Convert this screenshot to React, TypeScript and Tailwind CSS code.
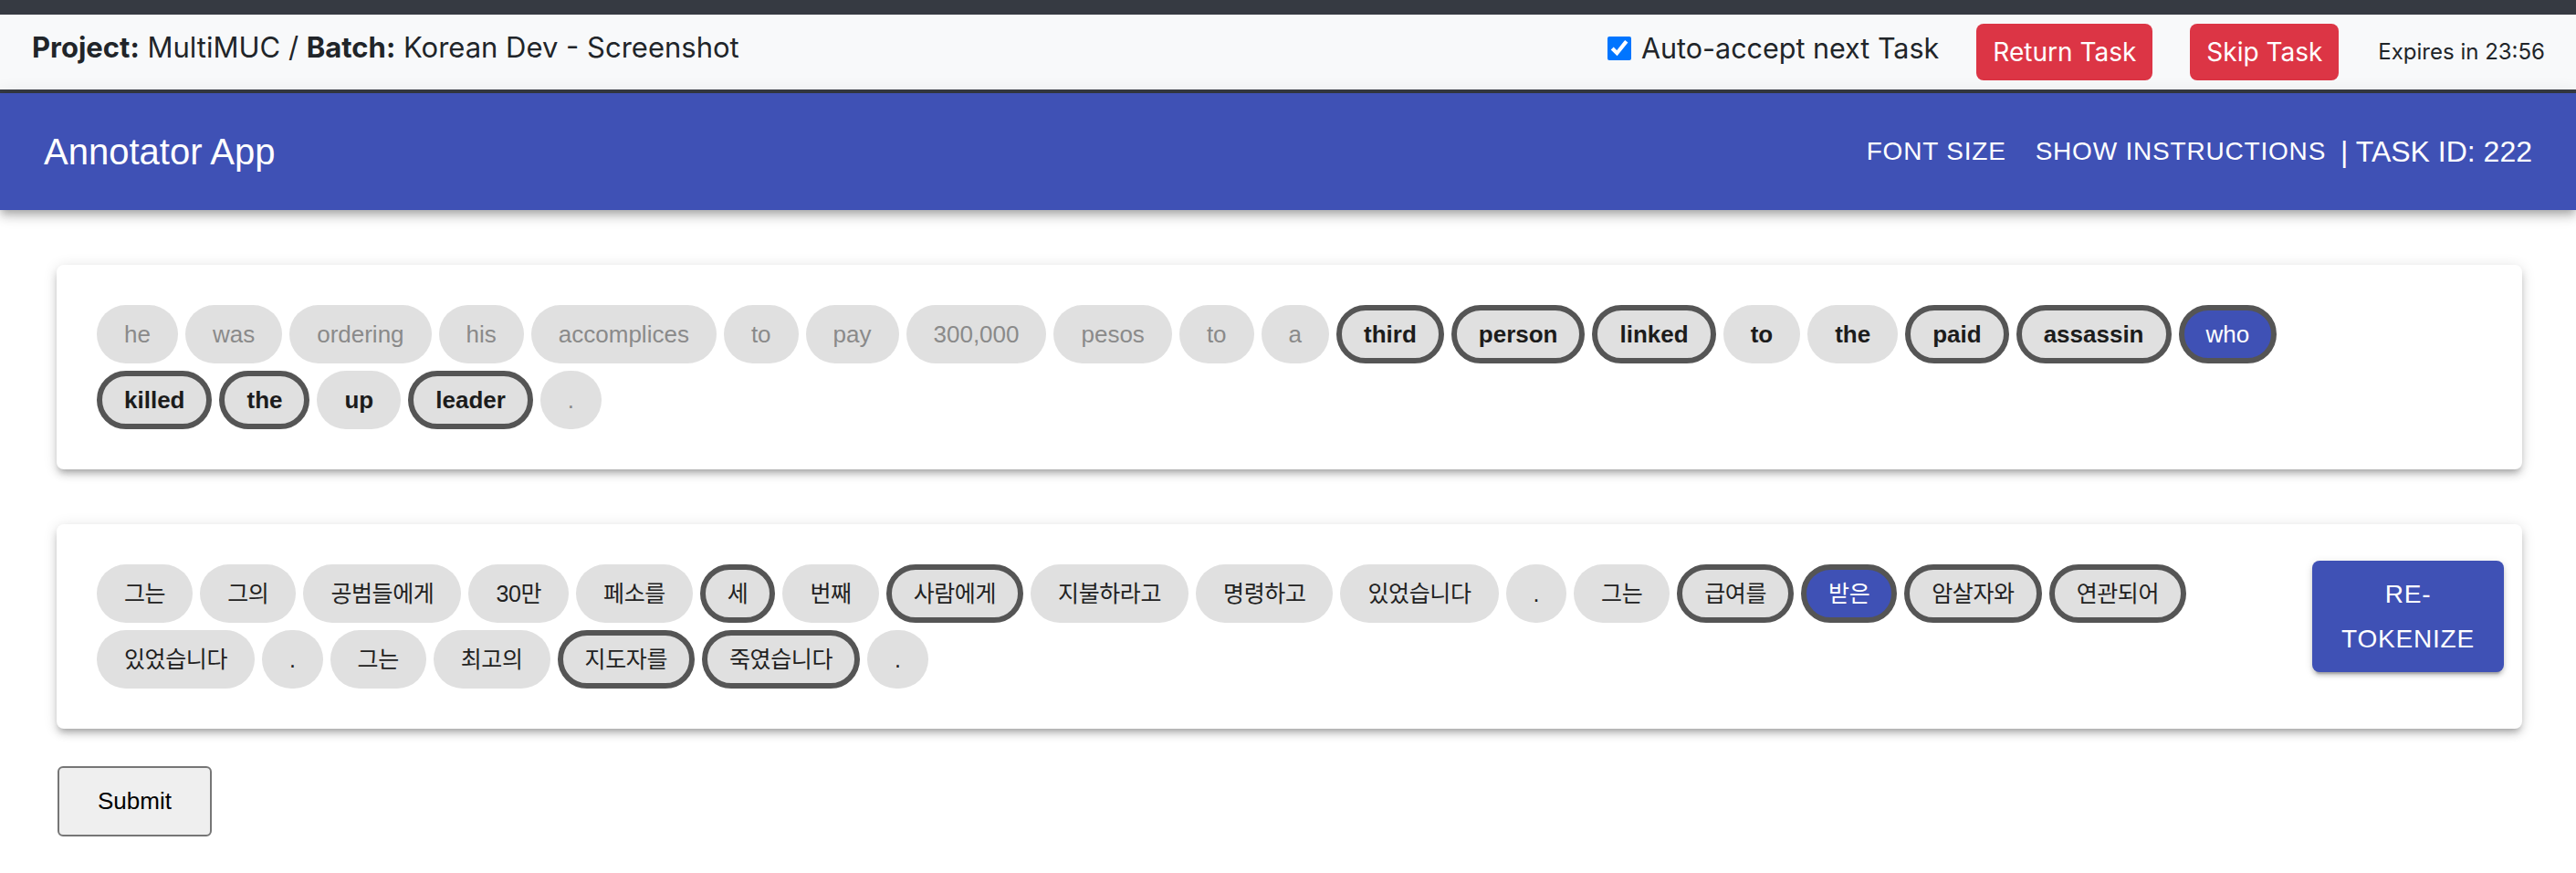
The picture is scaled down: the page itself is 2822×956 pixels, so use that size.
import React from "react";

type Tok = { t: string; b?: boolean; o?: boolean; s?: boolean };

const en: Tok[] = [
  { t: "he" }, { t: "was" }, { t: "ordering" }, { t: "his" }, { t: "accomplices" }, { t: "to" }, { t: "pay" },
  { t: "300,000" }, { t: "pesos" }, { t: "to" }, { t: "a" },
  { t: "third", b: true, o: true }, { t: "person", b: true, o: true }, { t: "linked", b: true, o: true },
  { t: "to", b: true }, { t: "the", b: true }, { t: "paid", b: true, o: true }, { t: "assassin", b: true, o: true },
  { t: "who", o: true, s: true },
  { t: "killed", b: true, o: true }, { t: "the", b: true, o: true }, { t: "up", b: true }, { t: "leader", b: true, o: true },
  { t: "." },
];

const ko: Tok[] = [
  { t: "그는" }, { t: "그의" }, { t: "공범들에게" }, { t: "30만" }, { t: "페소를" }, { t: "세", o: true }, { t: "번째" },
  { t: "사람에게", o: true }, { t: "지불하라고" }, { t: "명령하고" }, { t: "있었습니다" }, { t: "." }, { t: "그는" },
  { t: "급여를", o: true }, { t: "받은", o: true, s: true }, { t: "암살자와", o: true }, { t: "연관되어", o: true },
  { t: "있었습니다" }, { t: "." }, { t: "그는" }, { t: "최고의" }, { t: "지도자를", o: true }, { t: "죽였습니다", o: true }, { t: "." },
];

function Token({ tok, korean }: { tok: Tok; korean?: boolean }) {
  const outline = tok.o ? "border-[6px] border-[#555555] px-[24px]" : "px-[30px]";
  const bg = tok.s ? "bg-[#3f51b5] text-white" : "bg-[#e0e0e0]";
  let color = "";
  if (!tok.s) {
    if (korean) color = "text-[#222222]";
    else if (tok.b) color = "font-bold text-[#1c1c1c]";
    else color = "text-[#8a8a8a]";
  }
  const font = korean
    ? "text-[25px] tracking-[-0.4px] font-['Liberation_Sans','Noto_Sans_CJK_KR',sans-serif]"
    : "text-[26px] font-['Liberation_Sans',Arial,sans-serif]";
  return (
    <div className={`m-[4px] h-[64px] rounded-full flex items-center whitespace-nowrap leading-none ${outline} ${bg} ${color} ${font}`}>
      {tok.t}
    </div>
  );
}

function Card({ tokens, korean, button }: { tokens: Tok[]; korean?: boolean; button?: boolean }) {
  return (
    <div className="bg-white rounded-[8px] shadow-[0_6px_6px_-4px_rgba(0,0,0,0.2),0_6px_8px_0_rgba(0,0,0,0.14),0_2px_16px_0_rgba(0,0,0,0.12)] pl-[40px] pr-[20px] py-[40px] flex">
      <div className="flex-1 flex flex-wrap content-start">
        {tokens.map((tk, i) => (
          <Token key={i} tok={tk} korean={korean} />
        ))}
      </div>
      <div className="w-[210px] shrink-0">
        {button && (
          <button className="w-[210px] bg-[#3f51b5] text-white rounded-[8px] px-[30px] py-[12px] text-[28px] leading-[49px] tracking-[0.8px] uppercase font-['Liberation_Sans',Arial,sans-serif] shadow-[0_6px_2px_-4px_rgba(0,0,0,0.2),0_4px_4px_0_rgba(0,0,0,0.14),0_2px_10px_0_rgba(0,0,0,0.12)] text-center">
            RE-TOKENIZE
          </button>
        )}
      </div>
    </div>
  );
}

export default function App() {
  return (
    <div className="min-h-[956px] bg-white">
      <div className="h-[16px] bg-[#363a42]" />
      <div className="h-[82px] bg-[#f8f9fa] flex items-center justify-between pl-[35px] pr-[34px] font-['Inter','Liberation_Sans',sans-serif] text-[#212529]">
        <div className="text-[31px] mb-[10px] whitespace-nowrap">
          <b className="font-bold">Project:</b> MultiMUC / <b className="font-bold">Batch:</b> Korean Dev - Screenshot
        </div>
        <div className="flex items-center">
          <label className="flex items-center mb-[8px]">
            <input type="checkbox" defaultChecked className="w-[26px] h-[26px] m-0 accent-[#0075ff]" />
            <span className="ml-[11px] text-[30.5px] whitespace-nowrap">Auto-accept next Task</span>
          </label>
          <button className="ml-[41px] h-[62px] px-[18px] bg-[#dc3545] text-white text-[28px] rounded-[8px] whitespace-nowrap">
            Return Task
          </button>
          <button className="ml-[41px] h-[62px] px-[18px] bg-[#dc3545] text-white text-[28px] rounded-[8px] whitespace-nowrap">
            Skip Task
          </button>
          <span className="ml-[43px] text-[24px] whitespace-nowrap">Expires in 23:56</span>
        </div>
      </div>
      <div className="h-[4px] bg-[#363a42]" />
      <header className="h-[128px] bg-[#3f51b5] flex items-center justify-between px-[48px] text-white font-['Liberation_Sans',Arial,sans-serif] shadow-[0_4px_8px_-2px_rgba(0,0,0,0.2),0_8px_10px_0_rgba(0,0,0,0.14),0_2px_20px_0_rgba(0,0,0,0.12)] relative">
        <div className="text-[40px]">Annotator App</div>
        <div className="flex items-center">
          <span className="px-[16px] text-[28px] tracking-[0.8px] uppercase">Font size</span>
          <span className="px-[16px] text-[28px] tracking-[0.8px] uppercase">Show instructions</span>
          <span className="text-[32px] whitespace-pre">| TASK ID: 222</span>
        </div>
      </header>
      <div className="pl-[62px] pr-[59px]">
        <div className="mt-[60px]">
          <Card tokens={en} />
        </div>
        <div className="mt-[60px]">
          <Card tokens={ko} korean button />
        </div>
        <button className="mt-[41px] ml-[1px] w-[169px] h-[77px] bg-[#efefef] border-2 border-[#767676] rounded-[6px] text-[26px] text-black font-['Liberation_Sans',Arial,sans-serif]">
          Submit
        </button>
      </div>
    </div>
  );
}
